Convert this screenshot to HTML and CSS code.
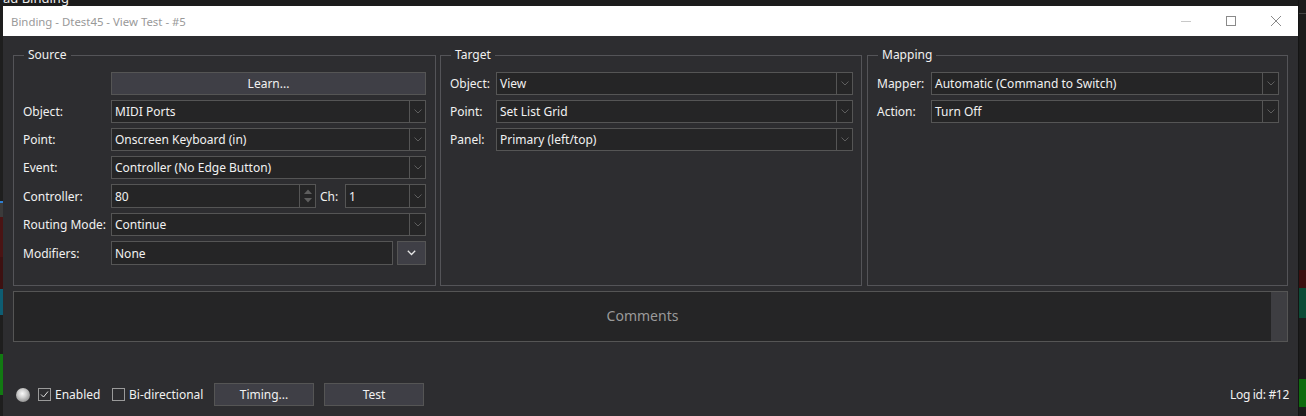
FILE: index.html
```html
<!DOCTYPE html>
<html>
	<head>
		<meta charset="UTF-8">
		<title>Binding - Dtest45 - View Test - #5</title>
		<link rel="stylesheet" href="styles.css">
	</head>
	<body>
		<div class="desk">
			<div class="edge edgeleft"></div>
			<div class="middle">
				<div class="behind"><span>ad Binding</span></div>
				<div class="window">
					<div class="titlebar">
						<span class="title">Binding - Dtest45 - View Test - #5</span>
						<span class="winbtn">
							<svg width="12" height="12" viewBox="0 0 12 12"><line x1="1" y1="6.5" x2="11" y2="6.5" stroke="#c8c8c8" stroke-width="1"/></svg>
						</span>
						<span class="winbtn">
							<svg width="12" height="12" viewBox="0 0 12 12"><rect x="1.5" y="1.5" width="9" height="9" fill="none" stroke="#8a8a8a" stroke-width="1"/></svg>
						</span>
						<span class="winbtn">
							<svg width="12" height="12" viewBox="0 0 12 12"><path d="M1 1 L11 11 M11 1 L1 11" stroke="#8a8a8a" stroke-width="1"/></svg>
						</span>
					</div>

					<div class="dlg">
						<div class="groups">
							<fieldset class="group source">
								<legend>Source</legend>
								<div class="row">
									<span class="lbl"></span>
									<div class="btn grow">Learn...</div>
								</div>
								<div class="row">
									<span class="lbl">Object:</span>
									<div class="select"><span class="val">MIDI Ports</span><span class="arrow"><svg width="8" height="5" viewBox="0 0 8 5"><path d="M0.5 0.5 L4 4 L7.5 0.5" fill="none" stroke="#5e5e5e"/></svg></span></div>
								</div>
								<div class="row">
									<span class="lbl">Point:</span>
									<div class="select"><span class="val">Onscreen Keyboard (in)</span><span class="arrow"><svg width="8" height="5" viewBox="0 0 8 5"><path d="M0.5 0.5 L4 4 L7.5 0.5" fill="none" stroke="#5e5e5e"/></svg></span></div>
								</div>
								<div class="row">
									<span class="lbl">Event:</span>
									<div class="select"><span class="val">Controller (No Edge Button)</span><span class="arrow"><svg width="8" height="5" viewBox="0 0 8 5"><path d="M0.5 0.5 L4 4 L7.5 0.5" fill="none" stroke="#5e5e5e"/></svg></span></div>
								</div>
								<div class="row tall">
									<span class="lbl">Controller:</span>
									<div class="spinbox">
										<span class="val">80</span>
										<span class="spin">
											<svg width="8" height="5" viewBox="0 0 8 5"><path d="M0 5 L4 0.5 L8 5 Z" fill="#5e5e5e"/></svg>
											<svg width="8" height="5" viewBox="0 0 8 5"><path d="M0 0 L4 4.5 L8 0 Z" fill="#5e5e5e"/></svg>
										</span>
									</div>
									<span class="chlbl">Ch:</span>
									<div class="select ch"><span class="val">1</span><span class="arrow"><svg width="8" height="5" viewBox="0 0 8 5"><path d="M0.5 0.5 L4 4 L7.5 0.5" fill="none" stroke="#5e5e5e"/></svg></span></div>
								</div>
								<div class="row">
									<span class="lbl">Routing Mode:</span>
									<div class="select"><span class="val">Continue</span><span class="arrow"><svg width="8" height="5" viewBox="0 0 8 5"><path d="M0.5 0.5 L4 4 L7.5 0.5" fill="none" stroke="#5e5e5e"/></svg></span></div>
								</div>
								<div class="row tall">
									<span class="lbl">Modifiers:</span>
									<div class="field"><span class="val">None</span></div>
									<div class="btn drop"><svg width="9" height="6" viewBox="0 0 9 6"><path d="M0.8 0.8 L4.5 4.5 L8.2 0.8" fill="none" stroke="#e6e6e6" stroke-width="1.3"/></svg></div>
								</div>
							</fieldset>

							<fieldset class="group target">
								<legend>Target</legend>
								<div class="row">
									<span class="lbl">Object:</span>
									<div class="select"><span class="val">View</span><span class="arrow"><svg width="8" height="5" viewBox="0 0 8 5"><path d="M0.5 0.5 L4 4 L7.5 0.5" fill="none" stroke="#5e5e5e"/></svg></span></div>
								</div>
								<div class="row">
									<span class="lbl">Point:</span>
									<div class="select"><span class="val">Set List Grid</span><span class="arrow"><svg width="8" height="5" viewBox="0 0 8 5"><path d="M0.5 0.5 L4 4 L7.5 0.5" fill="none" stroke="#5e5e5e"/></svg></span></div>
								</div>
								<div class="row">
									<span class="lbl">Panel:</span>
									<div class="select"><span class="val">Primary (left/top)</span><span class="arrow"><svg width="8" height="5" viewBox="0 0 8 5"><path d="M0.5 0.5 L4 4 L7.5 0.5" fill="none" stroke="#5e5e5e"/></svg></span></div>
								</div>
							</fieldset>

							<fieldset class="group mapping">
								<legend>Mapping</legend>
								<div class="row">
									<span class="lbl">Mapper:</span>
									<div class="select"><span class="val">Automatic (Command to Switch)</span><span class="arrow"><svg width="8" height="5" viewBox="0 0 8 5"><path d="M0.5 0.5 L4 4 L7.5 0.5" fill="none" stroke="#5e5e5e"/></svg></span></div>
								</div>
								<div class="row">
									<span class="lbl">Action:</span>
									<div class="select"><span class="val">Turn Off</span><span class="arrow"><svg width="8" height="5" viewBox="0 0 8 5"><path d="M0.5 0.5 L4 4 L7.5 0.5" fill="none" stroke="#5e5e5e"/></svg></span></div>
								</div>
							</fieldset>
						</div>

						<div class="comments">
							<span class="ctext">Comments</span>
							<span class="scroll"></span>
						</div>

						<div class="bottombar">
							<span class="led"></span>
							<label class="chk enabled">
								<span class="box"><svg width="11" height="11" viewBox="0 0 11 11"><path d="M2 5.5 L4.5 8 L9 2.5" fill="none" stroke="#e0e0e0" stroke-width="1"/></svg></span>
								<span>Enabled</span>
							</label>
							<label class="chk bidir">
								<span class="box"></span>
								<span>Bi-directional</span>
							</label>
							<div class="btn wide">Timing...</div>
							<div class="btn wide">Test</div>
							<span class="logid">Log id: #12</span>
						</div>
					</div>
				</div>
			</div>
			<div class="edge edgeright"></div>
		</div>
	</body>
</html>
```

FILE: styles.css
```css
html, body{margin:0;padding:0;}
body{
	background-color:#1c1c1c;
	font-family:"Noto Sans","Open Sans",sans-serif;
	font-size:12px;
	color:#f1f1f1;
	overflow:hidden;
}
.desk{display:flex;width:1306px;height:416px;}
.edge{flex:none;}
.edgeleft{
	width:3px;
	background:linear-gradient(to bottom,
		#1e1e1e 0, #1e1e1e 201px,
		#2f7fd2 201px, #2f7fd2 203px,
		#3b3b3b 203px, #3b3b3b 217px,
		#4a1414 217px, #4a1414 257px,
		#3d1111 257px, #3d1111 289px,
		#0e5d73 289px, #0e5d73 315px,
		#1e1e1e 315px, #1e1e1e 354px,
		#127a12 354px, #127a12 395px,
		#1e1e1e 395px);
}
.edgeright{
	width:8px;
	border-left:1px solid #141414;
	box-sizing:border-box;
	background:linear-gradient(to bottom,
		#1b1b1b 0, #1b1b1b 13px,
		#444 13px, #444 14px,
		#1b1b1b 14px, #1b1b1b 270px,
		#3a0f0f 270px, #3a0f0f 288px,
		#0b4a36 288px, #0b4a36 318px,
		#1b1b1b 318px, #1b1b1b 379px,
		#0e6b0e 379px, #0e6b0e 407px,
		#1b1b1b 407px);
}
.middle{width:1295px;display:flex;flex-direction:column;}
.behind{height:6px;overflow:hidden;background-color:#1c1c1c;}
.behind span{display:block;margin-top:-9px;line-height:14px;font-size:13px;color:#eee;}

.window{flex:1;display:flex;flex-direction:column;}
.titlebar{height:30px;background-color:#fff;display:flex;align-items:center;}
.title{flex:1;padding-left:8px;color:#999;font-size:11.4px;}
.winbtn{width:45px;height:30px;display:flex;align-items:center;justify-content:center;}

.dlg{flex:1;background-color:#2d2d30;padding:11px 10px 0 10px;}
.groups{display:flex;height:239px;}
.group{
	margin:0;
	border:1px solid #545458;
	padding:9px 8px 0 9px;
	min-width:0;
	box-sizing:border-box;
}
.group legend{padding:0 4px;margin-left:1px;line-height:16px;}
.source{width:423px;margin-right:4px;padding-right:9px;}
.target{width:422px;margin-right:5px;}
.mapping{width:421px;}

.row{display:flex;align-items:center;height:23px;margin-bottom:5px;}
.row.tall{height:24px;}
.lbl{flex:none;}
.source .lbl{width:88px;}
.target .lbl{width:46px;}
.mapping .lbl{width:54px;}

.select,.spinbox,.field{
	display:flex;
	height:100%;
	box-sizing:border-box;
	border:1px solid #555;
	background-color:#252526;
}
.select{flex:1;}
.val{flex:1;padding-left:3px;white-space:nowrap;overflow:hidden;display:flex;align-items:center;}
.arrow,.spin{
	flex:none;
	width:16px;
	box-sizing:border-box;
	border-left:1px solid #555;
	display:flex;
	align-items:center;
	justify-content:center;
}
.spinbox{width:205px;flex:none;}
.spin{flex-direction:column;justify-content:space-evenly;}
.chlbl{width:29px;box-sizing:border-box;padding-left:4px;flex:none;}
.select.ch{flex:none;width:81px;}
.field{width:282px;flex:none;margin-right:4px;}

.btn{
	display:flex;
	align-items:center;
	justify-content:center;
	height:100%;
	box-sizing:border-box;
	border:1px solid #555;
	background-color:#3f3f46;
}
.btn.grow{flex:1;}
.btn.drop{width:29px;flex:none;}

.comments{
	margin-top:5px;
	height:51px;
	box-sizing:border-box;
	border:1px solid #555;
	background-color:#252526;
	display:flex;
}
.ctext{flex:1;display:flex;align-items:center;justify-content:center;color:#9a9a9a;font-size:14px;padding-bottom:2px;}
.scroll{width:16px;background-color:#3e3e42;}

.bottombar{margin-top:41px;height:23px;display:flex;align-items:center;}
.led{
	width:14px;height:14px;border-radius:50%;
	margin-left:3px;margin-right:8px;
	background:radial-gradient(circle at 45% 40%, #fafafa 0, #d0d0d0 35%, #8a8a8a 80%, #5a5a5a 100%);
}
.chk{display:flex;align-items:center;}
.chk .box{
	width:13px;height:13px;box-sizing:border-box;
	border:1px solid #9a9a9a;
	margin-right:4px;
	display:flex;align-items:center;justify-content:center;
}
.enabled{width:74px;}
.bidir{width:102px;}
.btn.wide{width:100px;margin-right:10px;}
.logid{margin-left:auto;margin-right:-1px;letter-spacing:-0.3px;}
```
